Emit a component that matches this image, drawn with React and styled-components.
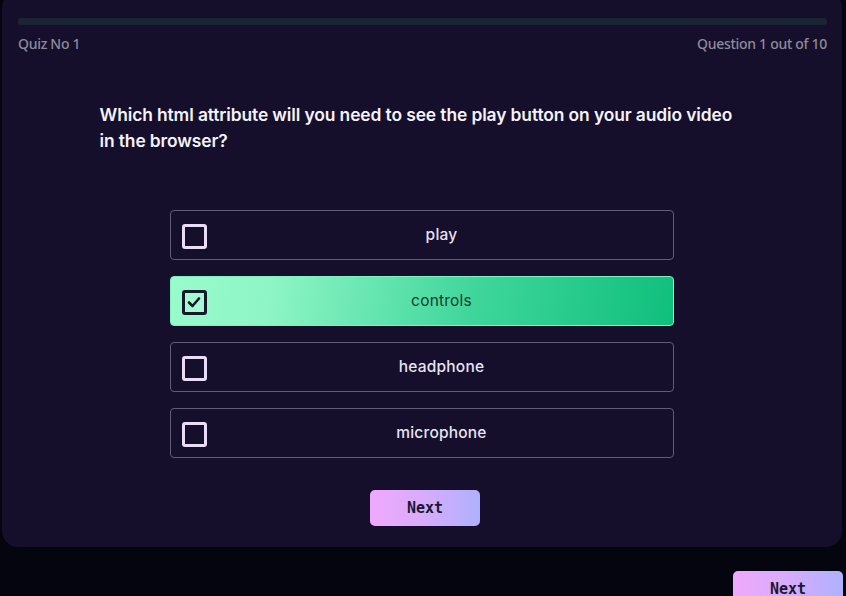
import React, { useState } from "react";
import styled, { createGlobalStyle } from "styled-components";

const Global = createGlobalStyle`
  html, body { margin: 0; padding: 0; background: #05050f; }
  body { font-family: "Inter", "Noto Sans", sans-serif; overflow: hidden; }
  * { box-sizing: border-box; }
`;

const Page = styled.div`
  width: 846px;
  height: 596px;
  padding: 0 4px 0 2px;
  display: flex;
  flex-direction: column;
`;

const Card = styled.section`
  margin-top: -8px;
  background: #150f2b;
  border-radius: 16px;
  padding: 26px 15px 21px 16px;
  display: flex;
  flex-direction: column;
  align-items: center;
`;

const Progress = styled.div`
  width: 100%;
  height: 7px;
  border-radius: 4px;
  background: #1b2336;
  overflow: hidden;
`;

const Fill = styled.div`
  height: 100%;
  background: #1b2336;
`;

const Meta = styled.div`
  width: 100%;
  display: flex;
  justify-content: space-between;
  margin-top: 9px;
  font-family: "Noto Sans", sans-serif;
  font-weight: 500;
  font-size: 14px;
  letter-spacing: -0.3px;
  color: #8d8b9c;
  line-height: 20px;
`;

const Question = styled.h2`
  width: 646px;
  margin: 48px 0 0 0;
  font-family: "Inter", sans-serif;
  font-weight: 600;
  font-size: 17.4px;
  line-height: 26px;
  color: #f4f2fa;
  letter-spacing: -0.1px;
`;

const Options = styled.div`
  width: 504px;
  margin: 56px 0 0 -2px;
  display: flex;
  flex-direction: column;
  gap: 16px;
`;

const Option = styled.button`
  height: 50px;
  display: flex;
  align-items: center;
  padding: 0 0 0 11px;
  border-radius: 4px;
  border: 1px solid ${(p) => (p.$selected ? "#7ff0bf" : "#615c78")};
  background: ${(p) =>
    p.$selected
      ? "linear-gradient(100deg, #99fbcb 0%, #8ef5c6 20%, #3fd69b 60%, #10bf7d 100%)"
      : "transparent"};
  cursor: pointer;
  font: inherit;
`;

const Box = styled.span`
  width: 25px;
  height: 25px;
  flex: none;
  margin-top: 2px;
  border-radius: 3px;
  border: 3px solid ${(p) => (p.$selected ? "#15192a" : "#e9dcf7")};
  background: ${(p) => (p.$selected ? "rgba(255,255,255,0.15)" : "transparent")};
  display: flex;
  align-items: center;
  justify-content: center;
`;

const Label = styled.span`
  flex: 1;
  text-align: center;
  padding-left: 4px;
  font-family: "Inter", sans-serif;
  font-size: 15.5px;
  font-weight: ${(p) => (p.$selected ? 400 : 500)};
  color: ${(p) => (p.$selected ? "#173a2c" : "#e8e2f3")};
  letter-spacing: 0.2px;
  margin-top: -2px;
`;

const NextButton = styled.button`
  width: 110px;
  height: 36px;
  border: none;
  border-radius: 5px;
  background: linear-gradient(90deg, #f0a9fc 0%, #d7acfd 50%, #aeb1fd 100%);
  font-family: "DejaVu Sans Mono", "Liberation Mono", monospace;
  font-weight: 700;
  font-size: 15px;
  color: #1a1830;
  cursor: pointer;
  padding: 0;
`;

const CenterNext = styled(NextButton)`
  margin-top: 32px;
  margin-left: 5px;
`;

const Footer = styled.div`
  display: flex;
  justify-content: flex-end;
  padding-top: 24px;
  margin-right: -1px;
`;

const options = ["play", "controls", "headphone", "microphone"];

export default function App() {
  const [sel, setSel] = useState(1);
  return (
    <>
      <Global />
      <Page>
        <Card>
          <Progress>
            <Fill style={{ width: "10%" }} />
          </Progress>
          <Meta>
            <span>Quiz No 1</span>
            <span>Question 1 out of 10</span>
          </Meta>
          <Question>
            Which html attribute will you need to see the play button on your audio video in the browser?
          </Question>
          <Options>
            {options.map((o, i) => (
              <Option key={o} $selected={sel === i} onClick={() => setSel(i)}>
                <Box $selected={sel === i}>
                  {sel === i && (
                    <svg width="14" height="12" viewBox="0 0 14 12">
                      <path d="M2 6.5 L5.5 10 L12 2.5" fill="none" stroke="#15192a" strokeWidth="2.6" strokeLinecap="round" strokeLinejoin="round" />
                    </svg>
                  )}
                </Box>
                <Label $selected={sel === i}>{o}</Label>
              </Option>
            ))}
          </Options>
          <CenterNext>Next</CenterNext>
        </Card>
        <Footer>
          <NextButton>Next</NextButton>
        </Footer>
      </Page>
    </>
  );
}
